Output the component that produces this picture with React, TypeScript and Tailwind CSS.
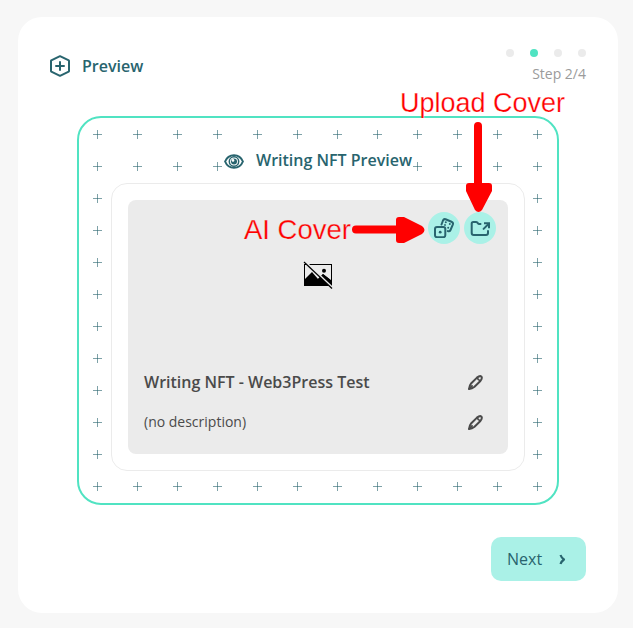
import React from "react";

function HexPlus() {
  return (
    <svg width="22" height="22" viewBox="0 0 22 22" fill="none" stroke="#28646e" strokeWidth="2" strokeLinejoin="round" strokeLinecap="round">
      <path d="M11 1.2 19.8 5.4Q20 5.6 20 6V16Q20 16.4 19.7 16.6L11 20.8 2.3 16.6Q2 16.4 2 16V6Q2 5.6 2.3 5.4Z" />
      <path d="M11 7V15M7 11H15" />
    </svg>
  );
}

function Eye() {
  return (
    <svg className="mt-0.5" width="20" height="15" viewBox="0 0 20 15" fill="none" stroke="#28646e" strokeWidth="2">
      <path d="M1.1 7.5C2.700 3.500 6 1.200 10 1.200S17.300 3.500 18.900 7.500C17.300 11.500 14 13.800 10 13.800S2.700 11.500 1.100 7.500Z" />
      <circle cx="10" cy="7.500" r="4.700" strokeWidth="1.500" />
      <circle cx="10" cy="7.500" r="3" fill="#28646e" stroke="none" />
      <circle cx="9" cy="6.400" r="1.300" fill="#fff" stroke="none" />
    </svg>
  );
}

function Dice() {
  return (
    <svg width="20" height="20" viewBox="0 0 20 20" fill="none" stroke="#28646e" strokeWidth="2" strokeLinejoin="round" strokeLinecap="round">
      <rect x="1" y="9" width="10.300" height="10.200" rx="2" />
      <path d="M7.500 6.500 9 2.500Q9.800.600 11.600 1.300L17.500 3.700Q19.600 4.600 18.800 6.600L16.500 12Q15.700 13.800 13.800 13.100" />
      <g fill="#28646e" stroke="none">
        <circle cx="6.200" cy="14.200" r="1.400" />
        <circle cx="11.800" cy="4.300" r="1" />
        <circle cx="15.800" cy="6" r="1" />
        <circle cx="11" cy="7" r="0.900" />
        <circle cx="14.200" cy="9.800" r="1" />
      </g>
    </svg>
  );
}

function FolderOut() {
  return (
    <svg width="20" height="18" viewBox="0 0 20 18" fill="none" stroke="#28646e" strokeWidth="2" strokeLinecap="round" strokeLinejoin="round">
      <path d="M10.500 5H9Q8.500 5 8 4.300L7.300 3.500Q6.800 3 6 3H3.300Q1.700 3 1.700 4.600V14Q1.700 16 3.700 16H16Q18 16 18 14V12" />
      <path d="M13.600 9.900 18.500 5" />
      <path d="M14 4.200H19V9.200" strokeLinecap="butt" strokeLinejoin="miter" />
    </svg>
  );
}

function Pen() {
  return (
    <svg className="mt-px mr-px" width="15" height="15" viewBox="0.500 0.500 15 15" fill="none" stroke="#4a4a4a" strokeWidth="2" strokeLinejoin="round" strokeLinecap="round">
      <path d="M1.500 14.500Q1.700 11.200 3.800 8.700L9.500 3.100Q12.300.900 13.800 2 15.200 3.500 12.900 6.500L7 12.200Q4.500 14.200 1.500 14.500Z" />
      <path d="M9.700 3Q10.300 5.500 12.800 6.200" strokeWidth="1.700" />
      <path d="M1.700 14.300 4.500 11.500" strokeWidth="1.800" />
    </svg>
  );
}

function NoImage() {
  return (
    <svg width="30" height="28" viewBox="0 0 30 28">
      <rect x="1.500" y="3.500" width="27" height="21" fill="none" stroke="#000" />
      <path d="M1 19 9 11 15 18 20 13 29 20V25H1Z" />
      <path d="m14 19 6-6 9 7v5H16Z" />
      <circle cx="21" cy="9.700" r="2" />
      <path d="M2.200 0.700 29.500 26.700" stroke="#ebebeb" strokeWidth="2" />
      <path d="M1 1 29 27.500" stroke="#000" strokeWidth="1.200" />
    </svg>
  );
}

function PlusPattern() {
  return (
    <svg className="absolute inset-0" width="478" height="385">
      <defs>
        <pattern id="plus" width="40" height="32" patternUnits="userSpaceOnUse">
          <path d="M14 16.500h9M18.500 12v9" stroke="#28646e" strokeOpacity=".6" strokeWidth="1" />
        </pattern>
      </defs>
      <rect x="0" y="0" width="478" height="385" fill="url(#plus)" />
    </svg>
  );
}

const steps = [false, true, false, false];

export default function App() {
  return (
    <div className="relative h-[628px] w-[633px] overflow-hidden bg-[#f7f7f7] pt-[17px] pl-[18px] font-['Open_Sans',sans-serif]">
      <main className="flex h-[596px] w-[600px] flex-col rounded-3xl bg-white px-8">
        <header className="flex h-[99px] shrink-0 items-start justify-between">
          <div className="mt-[37px] -ml-px flex h-6 items-center gap-[11px]">
            <HexPlus />
            <h1 className="text-base font-semibold leading-6 text-[#28646e]">Preview</h1>
          </div>
          <div className="flex flex-col items-end pt-8">
            <div className="flex gap-4">
              {steps.map((on, i) => (
                <span key={i} className={on ? "size-2 rounded-full bg-[#50e3c2]" : "size-2 rounded-full bg-[#ebebeb]"} />
              ))}
            </div>
            <p className="mt-[7px] text-sm leading-5 text-[#9b9b9b]">Step 2/4</p>
          </div>
        </header>

        <section className="relative ml-[27px] h-[389px] w-[482px] shrink-0 overflow-hidden rounded-3xl border-2 border-[#50e3c2]">
          <PlusPattern />
          <div className="relative flex flex-col items-center pt-[30px]">
            <div className="flex h-6 items-center gap-3 bg-white">
              <Eye />
              <h2 className="text-base font-semibold leading-6 text-[#28646e]">Writing NFT Preview</h2>
            </div>
            <div className="mt-[11px] h-[288px] w-[414px] rounded-2xl border border-[#ebebeb] bg-white p-4">
              <div className="flex h-[254px] flex-col rounded-lg bg-[#ebebeb]">
                <div className="flex justify-end gap-1 px-3 pt-3">
                  <button className="flex size-8 items-center justify-center rounded-full bg-[#aaf1e7]"><Dice /></button>
                  <button className="flex size-8 items-center justify-center rounded-full bg-[#aaf1e7]"><FolderOut /></button>
                </div>
                <div className="mt-[17px] flex justify-center"><NoImage /></div>
                <div className="mt-[81px] flex h-6 items-center justify-between pr-6 pl-4">
                  <h3 className="text-base font-semibold leading-6 text-[#4a4a4a]">Writing NFT - Web3Press Test</h3>
                  <Pen />
                </div>
                <div className="mt-4 flex h-6 items-center justify-between pr-6 pl-4">
                  <p className="text-sm text-[#4a4a4a]">(no description)</p>
                  <Pen />
                </div>
              </div>
            </div>
          </div>
        </section>

        <footer className="mt-8 flex justify-end">
          <button className="flex h-11 w-[95px] items-center rounded-[10px] bg-[#aaf1e7] pl-4 text-base text-[#28646e]">
            Next
            <svg className="ml-[17px]" width="7" height="11" viewBox="0 0 7 11" fill="none" stroke="#28646e" strokeWidth="2.200">
              <path d="M1.500 1Q2.500 3.800 5 5.500 2.500 7.200 1.500 10" strokeLinejoin="round" />
            </svg>
          </button>
        </footer>
      </main>

      <span className="absolute top-[88px] left-[400px] whitespace-nowrap font-['Liberation_Sans',sans-serif] text-[27px] leading-[31px] text-[#ff0000] [-webkit-text-stroke:0.250px_#ffffff]">Upload Cover</span>
      <span className="absolute top-[214px] left-[244px] whitespace-nowrap font-['Liberation_Sans',sans-serif] text-[27.500px] leading-[31px] text-[#ff0000] [-webkit-text-stroke:0.250px_#ebebeb]">AI Cover</span>
      <svg className="absolute top-[121px] left-[465px]" width="28" height="92" viewBox="0 0 28 92" fill="#ff0000">
        <path d="M9 5Q9 1 13 1T17 5V62H24Q27 62 27 65V70L17 89Q13.500 93 10 89L1 70V65Q1 62 4 62H9Z" />
      </svg>
      <svg className="absolute top-[216px] left-[351px]" width="75" height="28" viewBox="0 0 75 28" fill="#ff0000">
        <path d="M5 9.500Q1 9.500 1 13.500T5 17.500H45V24Q45 27 48 27H53L71 18Q76 14 71 10L53 1H48Q45 1 45 4V9.500Z" />
      </svg>
    </div>
  );
}
